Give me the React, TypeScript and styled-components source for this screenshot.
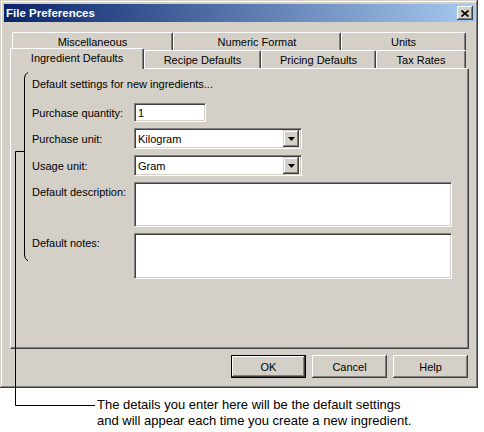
import styled, { createGlobalStyle } from "styled-components";

const face = "#D4D0C8";
const shadow = "#808080";
const darkShadow = "#404040";

const GlobalStyle = createGlobalStyle`
  html, body {
    margin: 0;
    padding: 0;
    background: #fff;
  }
  body {
    font-family: "Liberation Sans", Arial, sans-serif;
    font-size: 11px;
    color: #000;
  }
`;

const Page = styled.div`
  position: relative;
  width: 484px;
  height: 432px;
  overflow: hidden;
  background: #fff;
`;

const Window = styled.div`
  box-sizing: border-box;
  width: 478px;
  height: 388px;
  padding: 4px 3px 3px 4px;
  background: ${face};
  box-shadow: inset -1px -1px ${darkShadow}, inset 1px 1px ${face},
    inset -2px -2px ${shadow}, inset 2px 2px #fff;
`;

const TitleBar = styled.div`
  height: 18px;
  display: flex;
  align-items: center;
  justify-content: space-between;
  padding: 0 2px 0 2px;
  background: linear-gradient(90deg, #0a246a 0%, #a6caf0 100%);
  color: #fff;
  font-weight: bold;
  font-size: 11.5px;
`;

const CloseButton = styled.div`
  box-sizing: border-box;
  width: 16px;
  height: 14px;
  display: flex;
  align-items: center;
  justify-content: center;
  background: ${face};
  box-shadow: inset -1px -1px ${darkShadow}, inset 1px 1px #fff,
    inset -2px -2px ${shadow};
`;

const Body = styled.div`
  padding: 10px 6px 0 6px;
`;

const TabRow = styled.div<{ $front?: boolean }>`
  display: flex;
  align-items: flex-end;
  height: 18px;
  padding-left: ${(p) => (p.$front ? 0 : 2)}px;
  position: relative;
  z-index: ${(p) => (p.$front ? 2 : 1)};
`;

const Tab = styled.div<{ $w: number; $selected?: boolean }>`
  box-sizing: border-box;
  width: ${(p) => p.$w}px;
  height: ${(p) => (p.$selected ? 21 : 18)}px;
  margin-bottom: ${(p) => (p.$selected ? -1 : 0)}px;
  padding-bottom: ${(p) => (p.$selected ? 2 : 0)}px;
  display: flex;
  align-items: center;
  justify-content: center;
  background: ${face};
  border-top: 1px solid #fff;
  border-left: 1px solid #fff;
  border-right: 1px solid ${darkShadow};
  border-radius: 2px 2px 0 0;
  box-shadow: inset -1px 0 ${shadow};
  white-space: nowrap;
`;

const Panel = styled.div`
  box-sizing: border-box;
  width: 459px;
  height: 281px;
  padding: 8px 0 0 21px;
  border-top: 1px solid #fff;
  border-left: 1px solid #fff;
  border-right: 1px solid ${darkShadow};
  border-bottom: 1px solid ${darkShadow};
  box-shadow: inset -1px -1px ${shadow};
`;

const Heading = styled.div`
  line-height: 14px;
  margin-bottom: 12px;
`;

const Form = styled.div`
  display: grid;
  grid-template-columns: 102px auto;
  row-gap: 6px;
  justify-items: start;
`;

const Label = styled.div<{ $top?: boolean }>`
  line-height: 14px;
  align-self: ${(p) => (p.$top ? "start" : "center")};
  padding-top: ${(p) => (p.$top ? 3 : 0)}px;
`;

const sunken = `
  box-sizing: border-box;
  background: #fff;
  border: 1px solid;
  border-color: ${shadow} #fff #fff ${shadow};
  box-shadow: inset 1px 1px ${darkShadow}, inset -1px -1px ${face};
`;

const TextBox = styled.input<{ $w: number }>`
  ${sunken}
  width: ${(p) => p.$w}px;
  height: 19px;
  margin: 0;
  padding: 0 3px;
  font: inherit;
  color: #000;
  outline: none;
`;

const TextArea = styled.textarea<{ $h: number }>`
  ${sunken}
  display: block;
  width: 318px;
  height: ${(p) => p.$h}px;
  margin: 0;
  padding: 2px 3px;
  resize: none;
  font: inherit;
  outline: none;
`;

const Combo = styled.div`
  ${sunken}
  width: 168px;
  height: 21px;
  display: flex;
  align-items: center;
  padding: 2px;
`;

const ComboText = styled.span`
  flex: 1;
  padding-left: 1px;
`;

const DropButton = styled.span`
  box-sizing: border-box;
  width: 16px;
  height: 17px;
  display: flex;
  align-items: center;
  justify-content: center;
  background: ${face};
  box-shadow: inset -1px -1px ${darkShadow}, inset 1px 1px ${face},
    inset -2px -2px ${shadow}, inset 2px 2px #fff;
`;

const ButtonRow = styled.div`
  display: flex;
  justify-content: flex-end;
  gap: 6px;
  padding: 6px 1px 0 0;
`;

const Button = styled.div<{ $default?: boolean }>`
  box-sizing: border-box;
  width: 75px;
  height: 23px;
  display: flex;
  align-items: center;
  justify-content: center;
  background: ${face};
  border: ${(p) => (p.$default ? "1px solid #000" : "none")};
  box-shadow: inset -1px -1px ${darkShadow}, inset 1px 1px #fff,
    inset -2px -2px ${shadow};
`;

const Note = styled.div`
  margin-top: 9px;
  padding-left: 97px;
  font-size: 13px;
  line-height: 16px;
`;

const Callout = styled.svg`
  position: absolute;
  left: 0;
  top: 0;
  pointer-events: none;
`;

function Arrow() {
  return (
    <svg width="7" height="4" viewBox="0 0 7 4">
      <path d="M0 0h7L3.5 4z" fill="#000" />
    </svg>
  );
}

function Dropdown(props: { value: string }) {
  return (
    <Combo>
      <ComboText>{props.value}</ComboText>
      <DropButton>
        <Arrow />
      </DropButton>
    </Combo>
  );
}

export default function App() {
  return (
    <Page>
      <GlobalStyle />
      <Window>
        <TitleBar>
          <span>File Preferences</span>
          <CloseButton>
            <svg width="8" height="7" viewBox="0 0 8 7">
              <path d="M0.5 0.5l7 6M7.5 0.5l-7 6" stroke="#000" strokeWidth="1.6" />
            </svg>
          </CloseButton>
        </TitleBar>
        <Body>
          <TabRow>
            <Tab $w={161}>Miscellaneous</Tab>
            <Tab $w={168}>Numeric Format</Tab>
            <Tab $w={125}>Units</Tab>
          </TabRow>
          <TabRow $front>
            <Tab $w={134} $selected>
              Ingredient Defaults
            </Tab>
            <Tab $w={117}>Recipe Defaults</Tab>
            <Tab $w={115}>Pricing Defaults</Tab>
            <Tab $w={90}>Tax Rates</Tab>
          </TabRow>
          <Panel>
            <Heading>Default settings for new ingredients...</Heading>
            <Form>
              <Label>Purchase quantity:</Label>
              <TextBox $w={72} readOnly defaultValue="1" />
              <Label>Purchase unit:</Label>
              <Dropdown value="Kilogram" />
              <Label>Usage unit:</Label>
              <Dropdown value="Gram" />
              <Label $top>Default description:</Label>
              <TextArea $h={45} readOnly />
              <Label $top>Default notes:</Label>
              <TextArea $h={46} readOnly />
            </Form>
          </Panel>
          <ButtonRow>
            <Button $default>OK</Button>
            <Button>Cancel</Button>
            <Button>Help</Button>
          </ButtonRow>
        </Body>
      </Window>
      <Note>
        The details you enter here will be the default settings
        <br />
        and will appear each time you create a new ingredient.
      </Note>
      <Callout width="484" height="432">
        <path
          d="M28 72.5 Q24.5 74 24.5 78 V255 Q24.5 259 28 261"
          fill="none"
          stroke="#000"
          strokeWidth="1"
        />
        <path d="M24.5 151.5 H15.5 V405.5 H95" fill="none" stroke="#000" strokeWidth="1" />
      </Callout>
    </Page>
  );
}
